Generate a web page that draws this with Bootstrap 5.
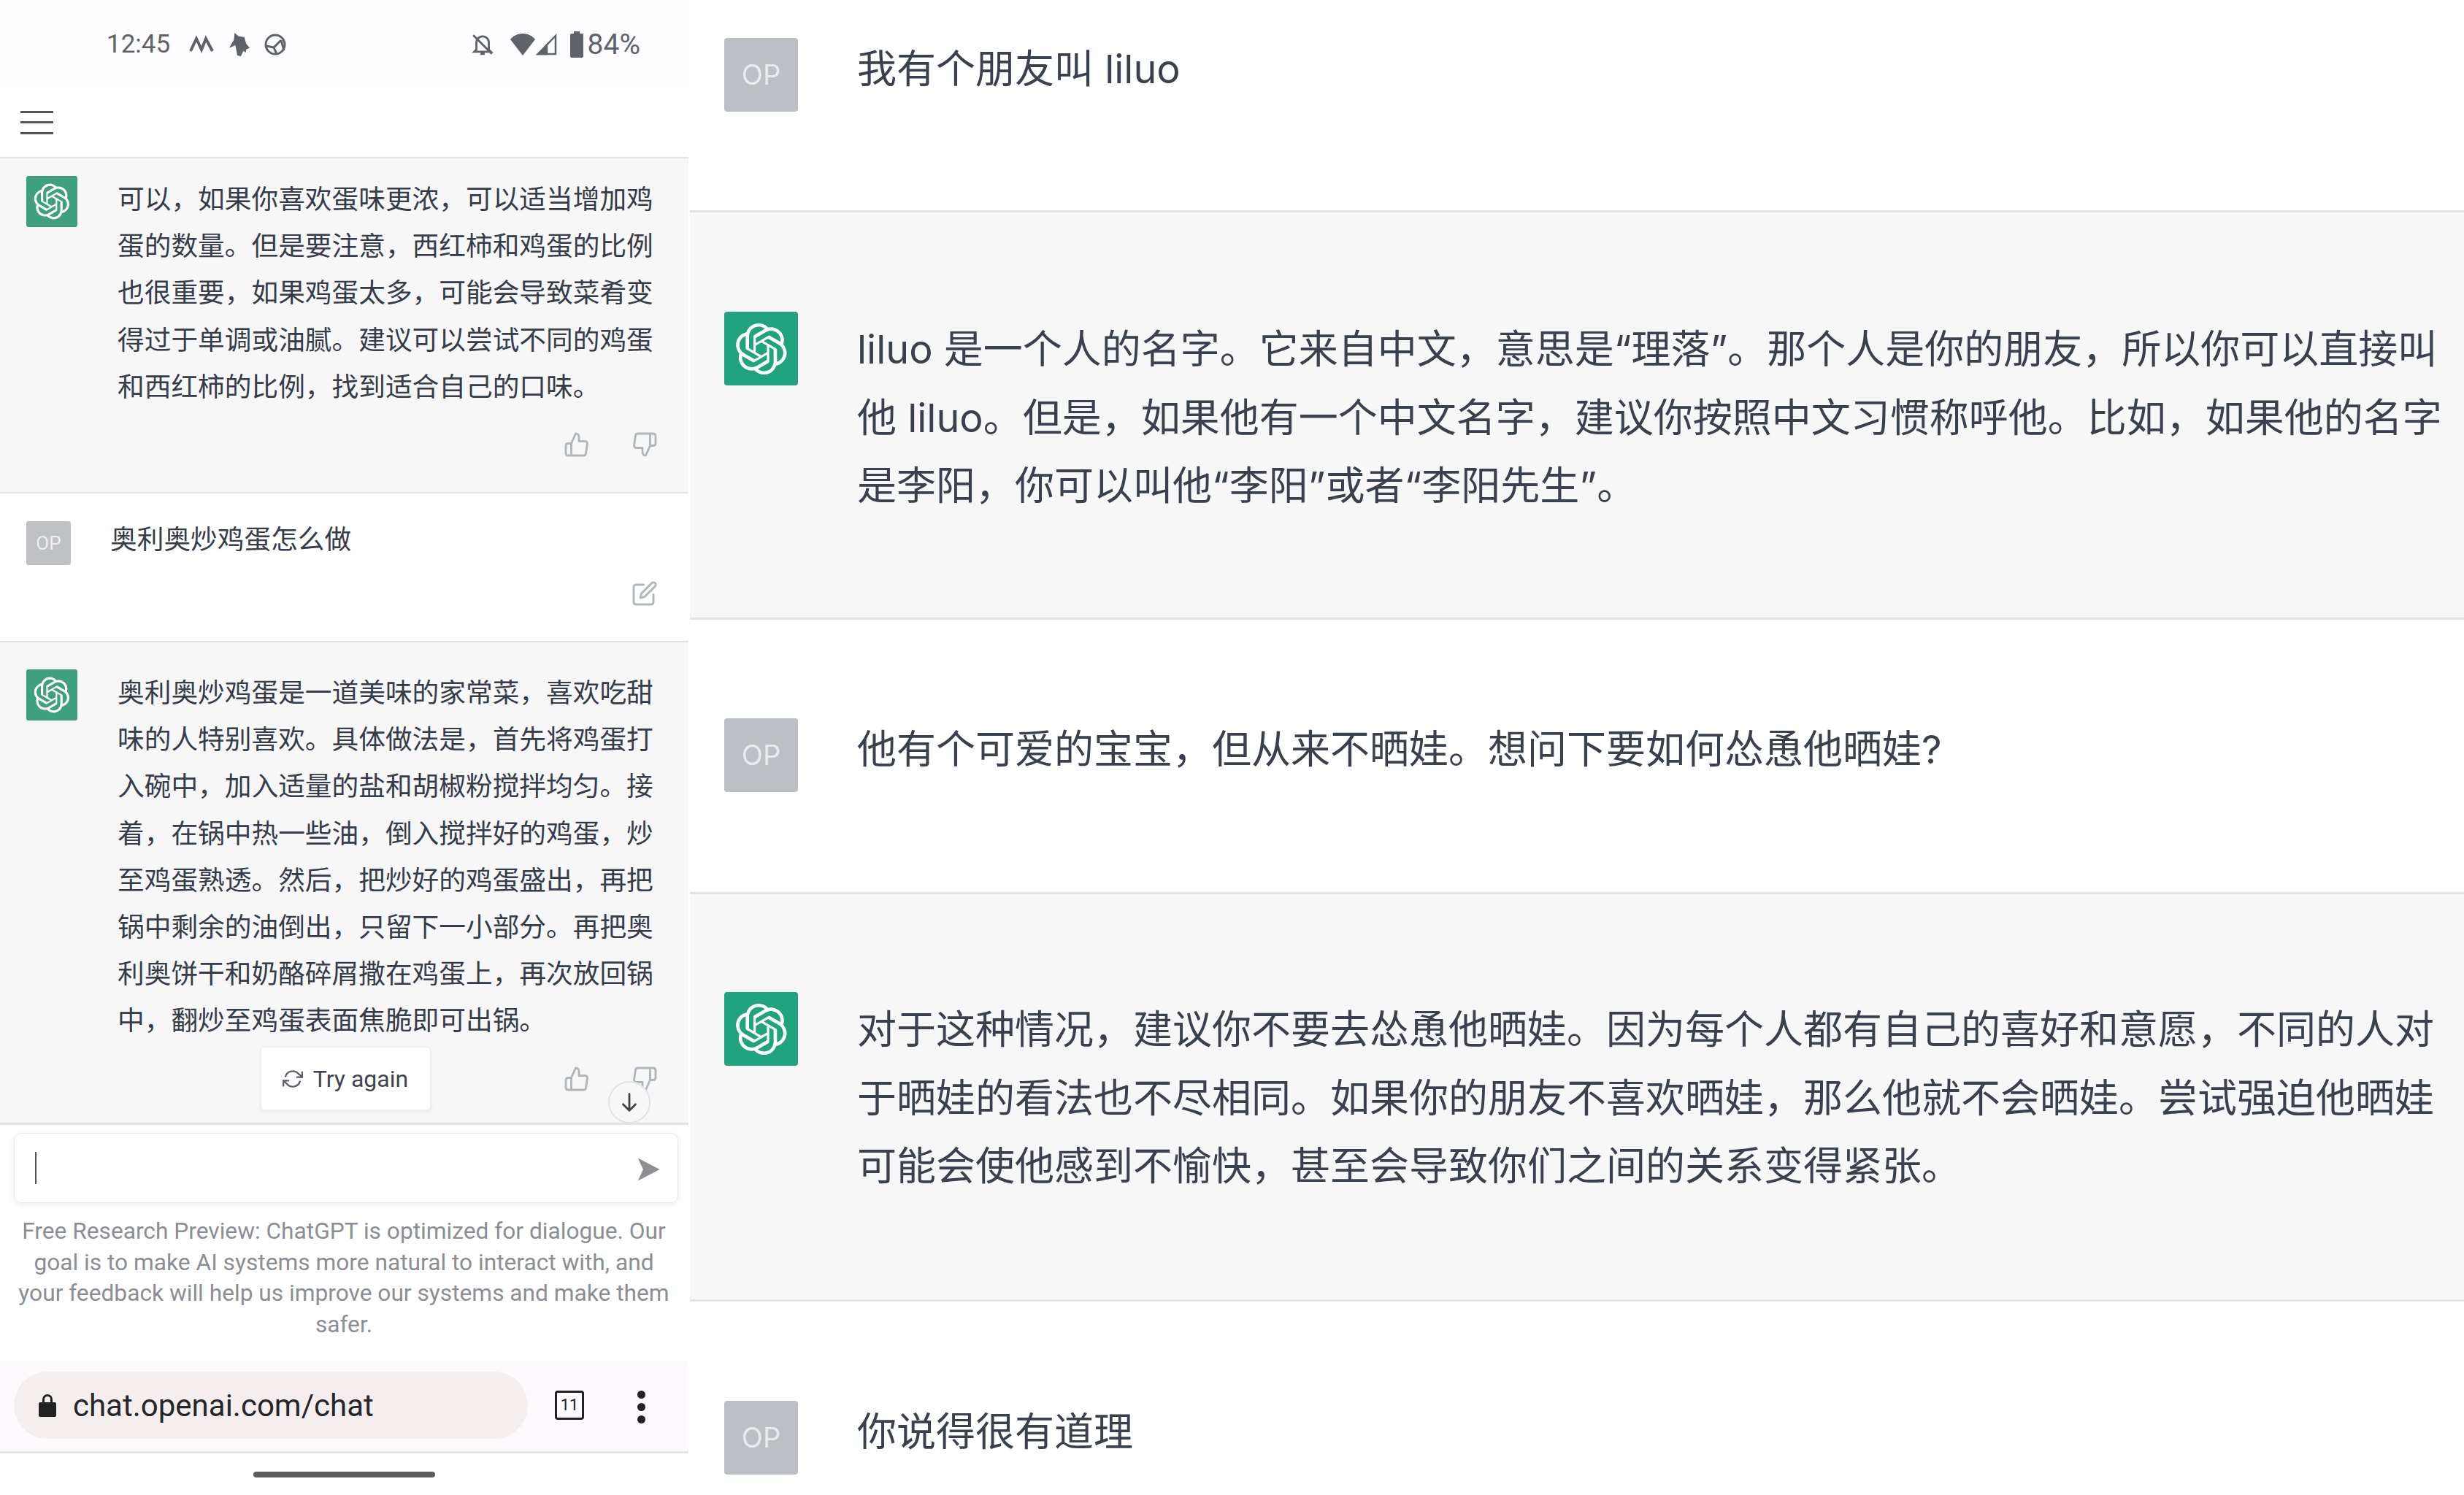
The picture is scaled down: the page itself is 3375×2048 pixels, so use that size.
<!DOCTYPE html>
<html lang="zh-CN">
<head>
  <meta charset="UTF-8">
  <title>ChatGPT</title>
  <link href="https://cdn.jsdelivr.net/npm/bootstrap@5.3.3/dist/css/bootstrap.min.css" rel="stylesheet">
  <script src="https://cdn.jsdelivr.net/npm/bootstrap@5.3.3/dist/js/bootstrap.bundle.min.js"></script>
  <style>
    html, body { height: 2048px; overflow: hidden; }
    body { background: #fff; color: #374151; font-family: Inter, "Noto Sans CJK SC", sans-serif; }

    .phone-pane { width: 943px; height: 2048px; margin-right: 2px; flex: none; font-family: Roboto, "Noto Sans CJK SC", sans-serif; }
    .desk-pane { flex: 1 1 auto; height: 2048px; overflow: hidden; }

    .status-strip { height: 120px; padding: 38px 66px 0 146px; background: #fdfcfe; color: #5f6368; font-size: 35px; line-height: 46px; }
    .status-strip svg { display: block; }
    .status-left { height: 46px; margin-left: 26px; gap: 18px; }
    .status-right { height: 46px; margin-left: auto; }
    .bell-off { margin-right: 20px; }
    .batt-cell { margin-left: 17px; }
    .batt-pct { margin-left: 6px; font-size: 39px; }
    .menu-strip { height: 97px; padding-left: 28px; border-bottom: 2px solid #e3e3e5; }
    .burger { width: 45px; height: 32px; border-top: 3px solid #555; border-bottom: 3px solid #555; position: relative; }
    .burger::after { content: ""; position: absolute; left: 0; right: 0; top: 11px; height: 3px; background: #555; }

    .turn-gray { background: #f7f7f8; }
    .phone-turn { border-bottom: 2px solid #e3e3e5; position: relative; }
    .turn-a { height: 459px; padding: 24px 0 0 36px; }
    .turn-b { height: 204px; padding: 38px 0 0 36px; }
    .turn-c { height: 661px; padding: 37px 0 0 36px; border-bottom: 3px solid #e3e3e5; }
    .phone-text { font-size: 36.7px; line-height: 64.2px; color: #363c48; white-space: nowrap; margin: 1px 0 0 55px; }
    .turn-b .phone-text { margin-left: 54px; margin-top: -6px; }
    .bot-small { width: 70px; height: 70px; background: #3fa07f; border-radius: 3px; flex: none; }
    .bot-small svg { width: 50px; height: 50px; }
    .user-small { width: 61px; height: 60px; background: #bfc1c4; color: #eceef0; border-radius: 3px; font-size: 26px; flex: none; }
    .thumb-row { margin-top: auto; padding-right: 42px; gap: 57px; }
    .turn-a .thumb-row, .turn-b .thumb-row { padding-bottom: 47px; }
    .line-icon { width: 36px; height: 36px; fill: none; stroke: #b3b5ba; stroke-width: 1.9; stroke-linecap: round; stroke-linejoin: round; flex: none; }
    .retry-row { display: grid; grid-template-columns: 1fr auto 1fr; align-items: center; margin: 0 0 17px -36px; }
    .retry-thumbs { padding-right: 42px; gap: 57px; }
    .retry-btn { height: 87px; width: 233px; margin-left: 3px; background: #fff; color: #40444c; font-size: 32px; border: 1px solid #ececee; border-radius: 4px; box-shadow: 0 2px 5px rgba(0,0,0,.06); gap: 14px; padding: 0; }
    .retry-btn svg { width: 28px; height: 28px; fill: none; stroke: #5c6068; stroke-width: 2; stroke-linecap: round; stroke-linejoin: round; }
    .down-btn { position: absolute; right: 52px; bottom: -1px; width: 58px; height: 58px; border-radius: 50%; background: #f7f7f8; border: 2px solid #e2e3e5; }
    .down-btn svg { width: 34px; height: 34px; fill: none; stroke: #444; stroke-width: 2; stroke-linecap: round; stroke-linejoin: round; }

    .composer { padding: 11px 14px 0 19px; }
    .input-box { height: 96px; border: 1px solid #e9e9eb; border-radius: 10px; box-shadow: 0 2px 8px rgba(0,0,0,.08); padding: 0 23px 0 28px; }
    .caret-bar { width: 2px; height: 44px; background: #555; }
    .send-icon { width: 34px; height: 34px; fill: #8e8e93; margin-top: 4px; }
    .fine-print { margin: 18px -4px 0 -10px; font-size: 31.7px; line-height: 42.5px; color: #8b8e93; text-align: center; white-space: nowrap; }

    .chrome-bar { margin-top: auto; height: 127px; padding: 15px 0 0 19px; background: #fcfafc; border-bottom: 3px solid #e6e6e8; }
    .url-pill { width: 704px; height: 92px; background: #f4efee; border-radius: 46px; padding-left: 33px; color: #25262a; font-size: 42px; gap: 22px; }
    .url-pill svg { width: 26px; height: 34px; }
    .tab-count { width: 40px; height: 40px; margin: 26px 0 0 37px; border: 3px solid #222; border-radius: 4px; font-size: 22px; line-height: 1; color: #222; flex: none; }
    .dots-v { margin: 26px 0 0 73px; gap: 6px; }
    .dots-v span { width: 11px; height: 11px; background: #222; border-radius: 50%; }
    .home-strip { height: 57px; }
    .home-pill { width: 249px; height: 8px; background: #5d5d5d; border-radius: 4px; }

    .desk-turn { padding-left: 47px; border-bottom: 3px solid #e4e4e6; }
    .desk-1 { height: 291px; padding-top: 52px; }
    .desk-2 { height: 558px; padding-top: 136px; }
    .desk-3 { height: 376px; padding-top: 135px; }
    .desk-4 { height: 558px; padding-top: 134px; }
    .desk-5 { height: 265px; padding-top: 136px; border-bottom: 0; }
    .bot-big { width: 101px; height: 101px; background: #20a47e; border-radius: 4px; flex: none; }
    .bot-big svg { width: 72px; height: 72px; }
    .user-big { width: 101px; height: 101px; background: #bcbfc3; color: #e9ebee; border-radius: 4px; font-size: 38px; flex: none; }
    .desk-text { margin-left: 81px; font-size: 54px; line-height: 93.5px; color: #3a414d; white-space: nowrap; }
    .pull-up { margin-top: -4px; }
    .pull-down { margin-top: 5px; }
  </style>
</head>

<body class="d-flex">
  <svg width="0" height="0" class="position-absolute">
    <symbol id="gptLogo" viewBox="0 0 41 41">
      <path fill="currentColor" d="M37.5324 16.8707C37.9808 15.5241 38.1363 14.0974 37.9886 12.6859C37.8409 11.2744 37.3934 9.91076 36.676 8.68622C35.6126 6.83404 33.9882 5.3676 32.0373 4.4985C30.0864 3.62941 27.9098 3.40259 25.8215 3.85078C24.8796 2.7893 23.7219 1.94125 22.4257 1.36341C21.1295 0.785575 19.7249 0.491269 18.3058 0.500197C16.1708 0.495044 14.0893 1.16803 12.3614 2.42214C10.6335 3.67624 9.34853 5.44666 8.6917 7.47815C7.30085 7.76286 5.98686 8.3414 4.8377 9.17505C3.68854 10.0087 2.73073 11.0782 2.02839 12.312C0.956464 14.1591 0.498905 16.2988 0.721698 18.4228C0.944492 20.5467 1.83612 22.5449 3.268 24.1293C2.81966 25.4759 2.66413 26.9026 2.81182 28.3141C2.95951 29.7256 3.40701 31.0892 4.12437 32.3138C5.18791 34.1659 6.8123 35.6322 8.76321 36.5013C10.7141 37.3704 12.8907 37.5973 14.9789 37.1492C15.9208 38.2107 17.0786 39.0587 18.3747 39.6366C19.6709 40.2144 21.0755 40.5087 22.4946 40.4998C24.6307 40.5054 26.7133 39.8321 28.4418 38.5772C30.1704 37.3223 31.4556 35.5506 32.1119 33.5179C33.5027 33.2332 34.8167 32.6547 35.9659 31.821C37.115 30.9874 38.0728 29.9178 38.7752 28.684C39.8458 26.8371 40.3023 24.6979 40.0789 22.5748C39.8556 20.4517 38.9639 18.4544 37.5324 16.8707ZM22.4978 37.8849C20.7443 37.8874 19.0459 37.2733 17.6994 36.1501C17.7601 36.117 17.8666 36.0586 17.936 36.0161L25.9004 31.4156C26.1003 31.3019 26.2663 31.137 26.3813 30.9378C26.4964 30.7386 26.5563 30.5124 26.5549 30.2825V19.0542L29.9213 20.998C29.9389 21.0068 29.9541 21.0198 29.9656 21.0359C29.977 21.052 29.9842 21.0707 29.9867 21.0902V30.3889C29.9842 32.375 29.1946 34.2791 27.7909 35.6841C26.3872 37.0892 24.4838 37.8806 22.4978 37.8849ZM6.39227 31.0064C5.51397 29.4888 5.19742 27.7107 5.49804 25.9832C5.55718 26.0187 5.66048 26.0818 5.73461 26.1244L13.699 30.7248C13.8975 30.8408 14.1233 30.902 14.3532 30.902C14.583 30.902 14.8088 30.8408 15.0073 30.7248L24.731 25.1103V28.9979C24.7321 29.0177 24.7283 29.0376 24.7199 29.0556C24.7115 29.0736 24.6988 29.0893 24.6829 29.1012L16.6317 33.7497C14.9096 34.7416 12.8643 35.0097 10.9447 34.4954C9.02506 33.9811 7.38785 32.7263 6.39227 31.0064ZM4.29707 13.6194C5.17156 12.0998 6.55279 10.9364 8.19885 10.3327C8.19885 10.4013 8.19491 10.5228 8.19491 10.6071V19.808C8.19351 20.0378 8.25334 20.2638 8.36823 20.4629C8.48312 20.6619 8.64893 20.8267 8.84863 20.9404L18.5723 26.5542L15.206 28.4979C15.1894 28.5089 15.1703 28.5155 15.1505 28.5173C15.1307 28.5191 15.1107 28.516 15.0924 28.5082L7.04046 23.8557C5.32135 22.8601 4.06716 21.2235 3.55289 19.3046C3.03862 17.3858 3.30624 15.3413 4.29707 13.6194ZM31.955 20.0556L22.2312 14.4411L25.5976 12.4981C25.6142 12.4872 25.6333 12.4805 25.6531 12.4787C25.6729 12.4769 25.6928 12.4801 25.7111 12.4879L33.7631 17.1364C34.9967 17.849 36.0017 18.8982 36.6606 20.1613C37.3194 21.4244 37.6047 22.849 37.4832 24.2684C37.3617 25.6878 36.8382 27.0432 35.9743 28.1759C35.1103 29.3086 33.9415 30.1717 32.6047 30.6641C32.6047 30.5947 32.6047 30.4733 32.6047 30.3889V21.188C32.6066 20.9586 32.5474 20.7328 32.4332 20.5338C32.319 20.3348 32.154 20.1698 31.955 20.0556ZM35.3055 15.0128C35.2464 14.9765 35.1431 14.9142 35.069 14.8717L27.1045 10.2712C26.906 10.1554 26.6803 10.0943 26.4504 10.0943C26.2206 10.0943 25.9948 10.1554 25.7963 10.2712L16.0726 15.8858V11.9982C16.0715 11.9783 16.0753 11.9585 16.0837 11.9405C16.0921 11.9225 16.1048 11.9068 16.1207 11.8949L24.1719 7.25025C25.4053 6.53903 26.8158 6.19376 28.2383 6.25482C29.6608 6.31589 31.0364 6.78077 32.2044 7.59508C33.3723 8.40939 34.2842 9.53945 34.8334 10.8531C35.3826 12.1667 35.5464 13.6095 35.3055 15.0128ZM14.2424 21.9419L10.8752 19.9981C10.8576 19.9893 10.8423 19.9763 10.8309 19.9602C10.8195 19.9441 10.8122 19.9254 10.8098 19.9058V10.6071C10.8107 9.18295 11.2173 7.78848 11.9819 6.58696C12.7466 5.38544 13.8377 4.42659 15.1275 3.82264C16.4173 3.21869 17.8524 2.99464 19.2649 3.1767C20.6775 3.35876 22.0089 3.93941 23.1034 4.85067C23.0427 4.88379 22.937 4.94215 22.8668 4.98473L14.9024 9.58517C14.7025 9.69878 14.5366 9.86356 14.4215 10.0626C14.3065 10.2616 14.2466 10.4877 14.2479 10.7175L14.2424 21.9419ZM16.071 17.9991L20.4018 15.4978L24.7325 17.9975V22.9985L20.4018 25.4983L16.071 22.9985V17.9991Z"/>
    </symbol>
    <symbol id="thumbUp" viewBox="0 0 24 24">
      <path d="M14 9V5a3 3 0 0 0-3-3l-4 9v11h11.28a2 2 0 0 0 2-1.7l1.38-9a2 2 0 0 0-2-2.3zM7 22H4a2 2 0 0 1-2-2v-7a2 2 0 0 1 2-2h3"/>
    </symbol>
    <symbol id="thumbDown" viewBox="0 0 24 24">
      <path d="M10 15v4a3 3 0 0 0 3 3l4-9V2H5.72a2 2 0 0 0-2 1.7l-1.38 9a2 2 0 0 0 2 2.3zm7-13h2.67A2.31 2.31 0 0 1 22 4v7a2.31 2.31 0 0 1-2.33 2H17"/>
    </symbol>
  </svg>

  <div class="phone-pane d-flex flex-column">
    <div class="status-strip d-flex">
      <span>12:45</span>
      <div class="status-left d-flex align-items-center">
        <svg width="34" height="26" viewBox="0 0 34 26" fill="none" stroke="#5f6368" stroke-width="4"><path d="M2 22 10 5l7 15 6-15 9 17"/></svg>
        <svg width="32" height="36" viewBox="0 0 34 36" fill="#5f6368"><path d="M11 1l6 5 8 1 3 10 5 6-5 2-1 5-3-3-4 8-5-1-3-15-9 4 7-12z"/></svg>
        <svg width="32" height="32" viewBox="0 0 32 32" fill="none" stroke="#5f6368" stroke-width="3"><circle cx="16" cy="16" r="13"/><path d="M4 18l10 2 10-10M14 20l4 9M24 10l4 14"/></svg>
      </div>
      <div class="status-right d-flex align-items-center">
        <svg width="34" height="34" viewBox="0 0 24 24" fill="none" stroke="#5f6368" stroke-width="2" class="bell-off"><path d="M6 17V10a6 6 0 0 1 9-5 6 6 0 0 1 3 5v7l2 2H4zM10 21h4M3 3l18 18"/></svg>
        <svg width="36" height="32" viewBox="0 0 36 32" fill="#5f6368"><path d="M18 31 1 9C5 4 11 1 18 1s13 3 17 8z"/></svg>
        <svg width="30" height="30" viewBox="0 0 30 30" fill="none" stroke="#5f6368" stroke-width="2.5"><path d="M27 3v25H3z"/><path d="M15 16v12H3z" fill="#5f6368"/></svg>
        <svg width="18" height="36" viewBox="0 0 18 36" fill="#5f6368" class="batt-cell"><path d="M5 0h8v3h3a2 2 0 0 1 2 2v29a2 2 0 0 1-2 2H2a2 2 0 0 1-2-2V5a2 2 0 0 1 2-2h3z"/></svg>
        <span class="batt-pct">84%</span>
      </div>
    </div>

    <div class="menu-strip d-flex align-items-center">
      <div class="burger"></div>
    </div>

    <section class="phone-turn turn-gray turn-a d-flex flex-column">
      <div class="d-flex">
        <div class="bot-small d-flex align-items-center justify-content-center text-white">
          <svg><use href="#gptLogo"/></svg>
        </div>
        <div class="phone-text">
          可以，如果你喜欢蛋味更浓，可以适当增加鸡<br>
          蛋的数量。但是要注意，西红柿和鸡蛋的比例<br>
          也很重要，如果鸡蛋太多，可能会导致菜肴变<br>
          得过于单调或油腻。建议可以尝试不同的鸡蛋<br>
          和西红柿的比例，找到适合自己的口味。
        </div>
      </div>
      <div class="thumb-row d-flex justify-content-end">
        <svg class="line-icon"><use href="#thumbUp"/></svg>
        <svg class="line-icon"><use href="#thumbDown"/></svg>
      </div>
    </section>

    <section class="phone-turn turn-b d-flex flex-column">
      <div class="d-flex">
        <div class="user-small d-flex align-items-center justify-content-center">OP</div>
        <div class="phone-text">奥利奥炒鸡蛋怎么做</div>
      </div>
      <div class="thumb-row d-flex justify-content-end">
        <svg class="line-icon" viewBox="0 0 24 24"><path d="M11 4H4a2 2 0 0 0-2 2v14a2 2 0 0 0 2 2h14a2 2 0 0 0 2-2v-7"/><path d="M18.5 2.5a2.121 2.121 0 0 1 3 3L12 15l-4 1 1-4 9.5-9.5z"/></svg>
      </div>
    </section>

    <section class="phone-turn turn-gray turn-c d-flex flex-column">
      <div class="d-flex">
        <div class="bot-small d-flex align-items-center justify-content-center text-white">
          <svg><use href="#gptLogo"/></svg>
        </div>
        <div class="phone-text">
          奥利奥炒鸡蛋是一道美味的家常菜，喜欢吃甜<br>
          味的人特别喜欢。具体做法是，首先将鸡蛋打<br>
          入碗中，加入适量的盐和胡椒粉搅拌均匀。接<br>
          着，在锅中热一些油，倒入搅拌好的鸡蛋，炒<br>
          至鸡蛋熟透。然后，把炒好的鸡蛋盛出，再把<br>
          锅中剩余的油倒出，只留下一小部分。再把奥<br>
          利奥饼干和奶酪碎屑撒在鸡蛋上，再次放回锅<br>
          中，翻炒至鸡蛋表面焦脆即可出锅。
        </div>
      </div>
      <div class="retry-row mt-auto">
        <span></span>
        <button type="button" class="btn retry-btn d-flex align-items-center justify-content-center">
          <svg viewBox="0 0 24 24"><path d="M23 4v6h-6M1 20v-6h6"/><path d="M3.5 9a9 9 0 0 1 14.9-3.4L23 10M1 14l4.6 4.4A9 9 0 0 0 20.5 15"/></svg>
          Try again
        </button>
        <div class="retry-thumbs d-flex justify-content-end">
          <svg class="line-icon"><use href="#thumbUp"/></svg>
          <svg class="line-icon"><use href="#thumbDown"/></svg>
        </div>
      </div>
      <div class="down-btn d-flex align-items-center justify-content-center">
        <svg viewBox="0 0 24 24"><path d="M12 4v16M6 14l6 6 6-6"/></svg>
      </div>
    </section>

    <section class="composer">
      <div class="input-box d-flex align-items-center justify-content-between">
        <span class="caret-bar"></span>
        <svg class="send-icon" viewBox="0 0 24 24"><path d="M2 1l21 11L2 23l5-11L2 1z"/></svg>
      </div>
      <p class="fine-print mb-0">
        Free Research Preview: ChatGPT is optimized for dialogue. Our<br>
        goal is to make AI systems more natural to interact with, and<br>
        your feedback will help us improve our systems and make them<br>
        safer.
      </p>
    </section>

    <div class="chrome-bar d-flex align-items-start">
      <div class="url-pill d-flex align-items-center">
        <svg viewBox="0 0 26 34"><path fill="#222" d="M3 13h3V9a7 7 0 0 1 14 0v4h3a2 2 0 0 1 2 2v16a2 2 0 0 1-2 2H3a2 2 0 0 1-2-2V15a2 2 0 0 1 2-2zm6 0h8V9a4 4 0 0 0-8 0z"/></svg>
        <span>chat.openai.com/chat</span>
      </div>
      <div class="tab-count d-flex align-items-center justify-content-center">11</div>
      <div class="dots-v d-flex flex-column"><span></span><span></span><span></span></div>
    </div>

    <div class="home-strip d-flex align-items-center justify-content-center">
      <div class="home-pill"></div>
    </div>
  </div>

  <div class="desk-pane">
    <section class="desk-turn desk-1 d-flex">
      <div class="user-big d-flex align-items-center justify-content-center">OP</div>
      <div class="desk-text pull-up">我有个朋友叫 liluo</div>
    </section>
    <section class="desk-turn desk-2 turn-gray d-flex">
      <div class="bot-big d-flex align-items-center justify-content-center text-white"><svg><use href="#gptLogo"/></svg></div>
      <div class="desk-text pull-down">
        liluo 是一个人的名字。它来自中文，意思是“理落”。那个人是你的朋友，所以你可以直接叫<br>
        他 liluo。但是，如果他有一个中文名字，建议你按照中文习惯称呼他。比如，如果他的名字<br>
        是李阳，你可以叫他“李阳”或者“李阳先生”。
      </div>
    </section>
    <section class="desk-turn desk-3 d-flex">
      <div class="user-big d-flex align-items-center justify-content-center">OP</div>
      <div class="desk-text pull-up">他有个可爱的宝宝，但从来不晒娃。想问下要如何怂恿他晒娃?</div>
    </section>
    <section class="desk-turn desk-4 turn-gray d-flex">
      <div class="bot-big d-flex align-items-center justify-content-center text-white"><svg><use href="#gptLogo"/></svg></div>
      <div class="desk-text pull-down">
        对于这种情况，建议你不要去怂恿他晒娃。因为每个人都有自己的喜好和意愿，不同的人对<br>
        于晒娃的看法也不尽相同。如果你的朋友不喜欢晒娃，那么他就不会晒娃。尝试强迫他晒娃<br>
        可能会使他感到不愉快，甚至会导致你们之间的关系变得紧张。
      </div>
    </section>
    <section class="desk-turn desk-5 d-flex">
      <div class="user-big d-flex align-items-center justify-content-center">OP</div>
      <div class="desk-text pull-up">你说得很有道理</div>
    </section>
  </div>
</body>
</html>
